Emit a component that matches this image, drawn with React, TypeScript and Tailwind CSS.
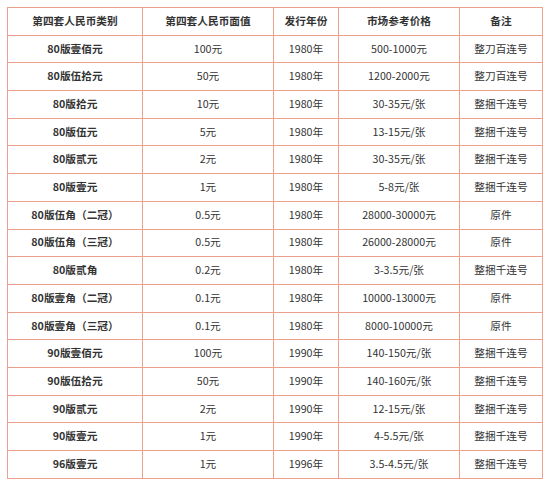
import React from "react";

const rows: [string, string, string, string, string][] = [
  ["80版壹佰元", "100元", "1980年", "500-1000元", "整刀百连号"],
  ["80版伍拾元", "50元", "1980年", "1200-2000元", "整刀百连号"],
  ["80版拾元", "10元", "1980年", "30-35元/张", "整捆千连号"],
  ["80版伍元", "5元", "1980年", "13-15元/张", "整捆千连号"],
  ["80版贰元", "2元", "1980年", "30-35元/张", "整捆千连号"],
  ["80版壹元", "1元", "1980年", "5-8元/张", "整捆千连号"],
  ["80版伍角（二冠）", "0.5元", "1980年", "28000-30000元", "原件"],
  ["80版伍角（三冠）", "0.5元", "1980年", "26000-28000元", "原件"],
  ["80版贰角", "0.2元", "1980年", "3-3.5元/张", "整捆千连号"],
  ["80版壹角（二冠）", "0.1元", "1980年", "10000-13000元", "原件"],
  ["80版壹角（三冠）", "0.1元", "1980年", "8000-10000元", "原件"],
  ["90版壹佰元", "100元", "1990年", "140-150元/张", "整捆千连号"],
  ["90版伍拾元", "50元", "1990年", "140-160元/张", "整捆千连号"],
  ["90版贰元", "2元", "1990年", "12-15元/张", "整捆千连号"],
  ["90版壹元", "1元", "1990年", "4-5.5元/张", "整捆千连号"],
  ["96版壹元", "1元", "1996年", "3.5-4.5元/张", "整捆千连号"],
];

const headers = ["第四套人民币类别", "第四套人民币面值", "发行年份", "市场参考价格", "备注"];

export default function App() {
  return (
    <div
      className="w-[550px] h-[486px] bg-white pt-[7px] pl-[7px]"
      style={{ fontFamily: '"Noto Sans CJK SC", "Noto Sans", sans-serif' }}
    >
      <table className="table-fixed border-collapse w-[535px] text-[10.7px] text-[#333] border border-[#eda18c]">
        <colgroup>
          <col className="w-[135px]" />
          <col className="w-[131px]" />
          <col className="w-[65px]" />
          <col className="w-[121px]" />
          <col className="w-[83px]" />
        </colgroup>
        <thead>
          <tr className="h-[27.7px]">
            {headers.map((h) => (
              <th
                key={h}
                className="border border-[#eda18c] font-bold text-center p-0 leading-none text-[#333]"
              >
                {h}
              </th>
            ))}
          </tr>
        </thead>
        <tbody>
          {rows.map((r, i) => (
            <tr key={i} className="h-[27.7px]">
              {r.map((c, j) => (
                <td
                  key={j}
                  className={
                    j === 0
                      ? "border border-[#eda18c] font-bold text-center p-0 leading-none text-[#333]"
                      : "border border-[#eda18c] text-center p-0 leading-none"
                  }
                >
                  {c}
                </td>
              ))}
            </tr>
          ))}
        </tbody>
      </table>
    </div>
  );
}
